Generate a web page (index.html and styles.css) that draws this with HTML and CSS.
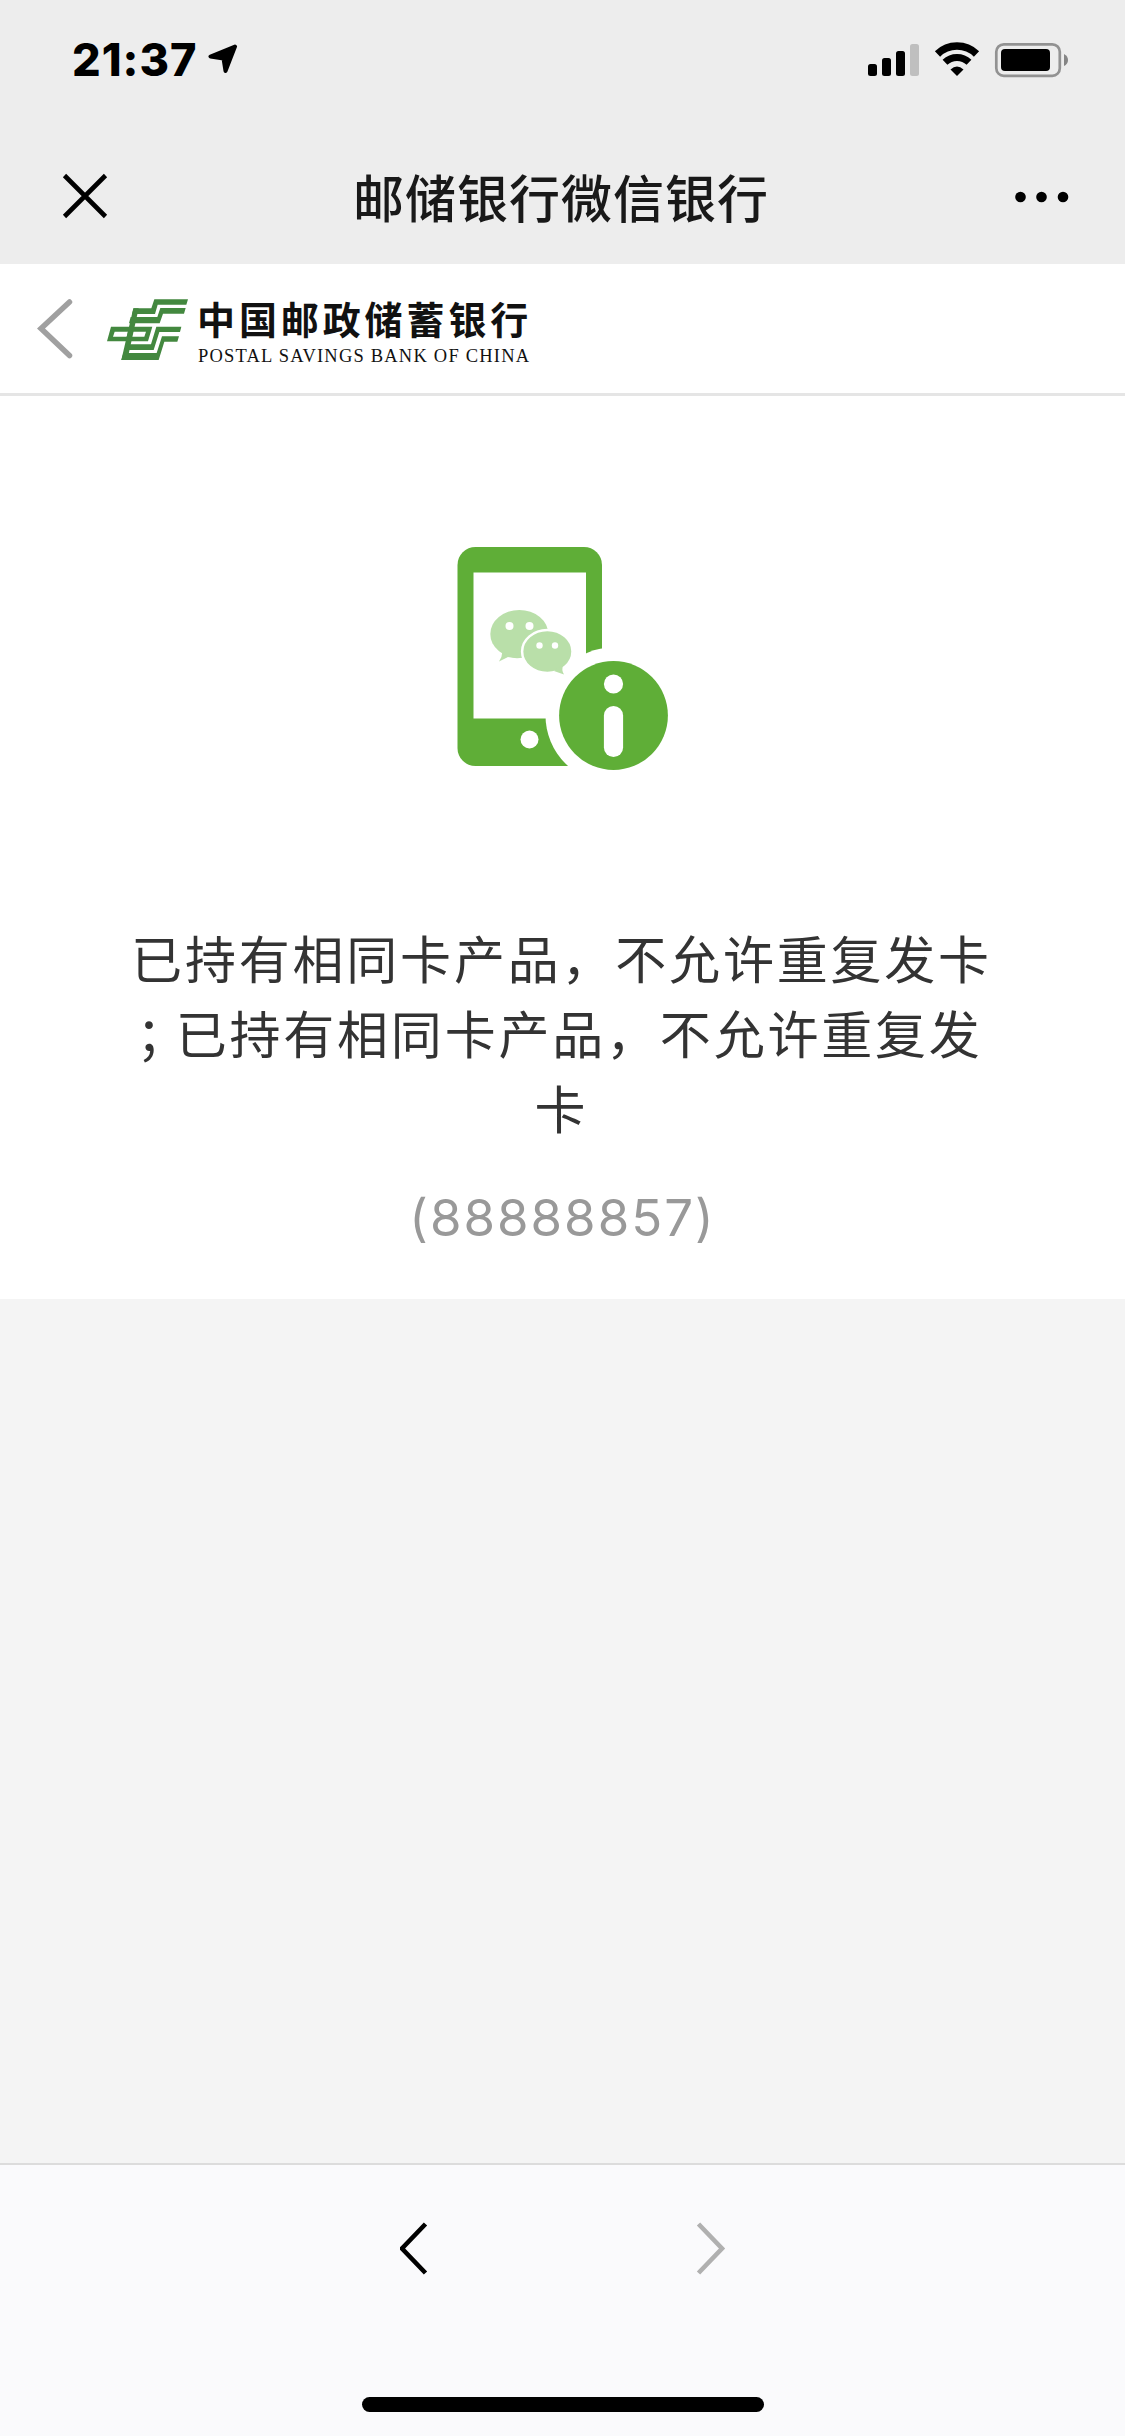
FILE: index.html
```html
<!DOCTYPE html>
<html lang="zh-CN">
<head>
<meta charset="utf-8">
<title>邮储银行微信银行</title>
<link rel="stylesheet" href="styles.css">
</head>
<body>
<div class="screen">
  <header class="top">
    <div class="status">
      <span class="time">21:37</span>
      <svg class="location" width="30" height="30" viewBox="0 0 30 30"><path d="M27 2.500 2.500 12.500 15.500 14.500 17.500 27Z" fill="#000" stroke="#000" stroke-width="4" stroke-linejoin="round"/></svg>
      <svg class="indicators" width="202" height="36" viewBox="867 42 202 36">
        <rect x="868" y="64" width="9" height="12" rx="2.500"/>
        <rect x="882" y="58" width="9" height="18" rx="2.500"/>
        <rect x="896" y="51" width="9" height="25" rx="2.500"/>
        <rect x="910" y="44" width="9" height="32" rx="2.500" fill="#bfbfbf"/>
        <path d="M937.500 54A28 28 0 0 1 976.500 54" fill="none" stroke="#000" stroke-width="7.500"/>
        <path d="M945 62.300A17.500 17.500 0 0 1 969 62.300" fill="none" stroke="#000" stroke-width="7"/>
        <path d="M950.500 69.500Q957 63.500 963.500 69.500L957 76Z"/>
        <rect x="996.300" y="44.300" width="63.500" height="31.500" rx="7.500" fill="none" stroke="#929292" stroke-width="2.700"/>
        <rect x="1001" y="49" width="49" height="22" rx="4"/>
        <path d="M1064 54Q1068 56 1068 60T1064 66Z" fill="#858585"/>
      </svg>
    </div>
    <div class="nav">
      <svg class="close" width="46" height="46" viewBox="0 0 46 46"><path d="M2.500 2.500 43.500 43.500M43.500 2.500 2.500 43.500" stroke="#000" stroke-width="4.600"/></svg>
      <h1 class="title">邮储银行微信银行</h1>
      <svg class="more" width="56" height="12" viewBox="0 0 56 12"><circle cx="6.500" cy="6" r="5.300"/><circle cx="27.500" cy="6" r="5.300"/><circle cx="49" cy="6" r="5.300"/></svg>
    </div>
  </header>
  <div class="brand">
    <svg class="back" width="36" height="62" viewBox="0 0 36 62"><path d="M32.500 4 4 30.500 32.500 57.500" fill="none" stroke="#a0a0a0" stroke-width="5.500" stroke-linecap="round"/></svg>
    <svg class="logo" width="82" height="62" viewBox="261 86 246 186">
      <g fill="#43883f">
        <path d="M403 87H504L499 103H413L405 131H336L341 114H394Z"/>
        <path d="M421 113H497L492 130H429L419 159H327L332 140H412Z"/>
        <path d="M340 114H356L322 269H304Z"/>
        <path fill-rule="evenodd" d="M273 169H397L384 213H261ZM284 184 279 199H373L378 184Z"/>
        <path d="M325 180H340L334 204H319Z"/>
        <path d="M409 169H484L480 185H418L401 239H313L318 222H393Z"/>
        <path d="M426 198H477L472 214H433L416 269H304L310 248H410Z"/>
      </g>
    </svg>
    <div class="wordmark">
      <span class="name">中国邮政储蓄银行</span>
      <span class="english">POSTAL SAVINGS BANK OF CHINA</span>
    </div>
  </div>
  <main class="result">
    <svg class="picture" width="212" height="224" viewBox="457 546 212 224">
      <rect x="457.500" y="547" width="144.500" height="219" rx="18" fill="#5fae37"/>
      <rect x="473.500" y="572.500" width="112.500" height="146" fill="#fff"/>
      <circle cx="529.500" cy="739.500" r="9" fill="#fff"/>
      <circle cx="613.500" cy="715.500" r="68" fill="#fff"/>
      <circle cx="613.500" cy="715.500" r="54.400" fill="#5fae37"/>
      <circle cx="613.500" cy="684" r="9.600" fill="#fff"/>
      <rect x="603.900" y="706" width="19.200" height="51" rx="9.600" fill="#fff"/>
      <g fill="#b9dfa9">
        <path d="M502 650Q503 656 499 661.500L508 657Q514 658.500 520 658L535 640Z"/>
        <ellipse cx="519.300" cy="634" rx="29" ry="24"/>
        <ellipse cx="547.300" cy="651.600" rx="25.200" ry="21.500" stroke="#fff" stroke-width="2.500"/>
        <path d="M554 671 564 674.500Q561 670 563.500 664Z"/>
      </g>
      <g fill="#fff"><circle cx="509.500" cy="626" r="4"/><circle cx="529.500" cy="626" r="4"/><circle cx="539.500" cy="645.500" r="3.200"/><circle cx="555" cy="645.500" r="3.200"/></g>
    </svg>
    <p class="message">
      <span class="line">已持有相同卡产品，不允许重复发卡</span>
      <span class="line"><span class="semi">；</span>已持有相同卡产品，不允许重复发</span>
      <span class="line">卡</span>
    </p>
    <p class="code">(88888857)</p>
  </main>
  <footer class="bottom">
    <div class="history">
      <svg width="30" height="54" viewBox="0 0 30 54"><path d="M25.500 3 2 27.500 25.500 52" fill="none" stroke="#000" stroke-width="4.600"/></svg>
      <svg width="30" height="54" viewBox="0 0 30 54"><path d="M2.500 3 26 27.500 2.500 52" fill="none" stroke="#b0b0b0" stroke-width="4.600"/></svg>
    </div>
    <div class="home"></div>
  </footer>
</div>
</body>
</html>
```
FILE: styles.css
```css
* { box-sizing: border-box; }
body { margin: 0; font-family: Inter, "Noto Sans CJK SC", sans-serif; }
svg { display: block; flex: none; }
.screen { width: 1125px; height: 2436px; display: flex; flex-direction: column; background: #f4f4f4; overflow: hidden; }
.top { height: 264px; background: #ededed; }
.status { height: 132px; display: flex; align-items: flex-start; padding: 42px 56px 0 72px; }
.time { font-size: 45px; line-height: 36px; font-weight: 800; letter-spacing: 1px; width: 136px; white-space: nowrap; }
.location { margin-top: 2px; }
.indicators { margin-left: auto; }
.nav { height: 130px; display: flex; align-items: center; justify-content: space-between; padding: 0 55px 2px 62px; }
.title { margin: 0; font: 500 51px/72px "Noto Sans CJK SC", sans-serif; letter-spacing: 1px; color: #191919; white-space: nowrap; }
.more { margin-top: 1px; }
.brand { height: 132px; background: #fff; border-bottom: 3px solid #e5e5e5; display: flex; align-items: flex-start; padding: 34px 0 0 37px; }
.logo { margin: 1px 0 0 34px; }
.wordmark { display: flex; flex-direction: column; margin-left: 8px; color: #111; white-space: nowrap; }
.name { font: 700 38px/40px "Noto Sans CJK SC", sans-serif; letter-spacing: 3.900px; }
.english { font: 18.500px/24px "Liberation Serif", serif; letter-spacing: 1.200px; margin: 6px 0 0 1px; }
.result { height: 903px; background: #fff; display: flex; flex-direction: column; align-items: center; padding-top: 150px; }
.message { margin: 150px 0 0; width: 862px; font: 400 51px/75px "Noto Sans CJK SC", sans-serif; letter-spacing: 2.800px; color: #333; text-align: center; }
.line { display: block; white-space: nowrap; margin-left: -2px; }
.semi { font-feature-settings: "halt"; margin-left: -4px; padding-right: 11px; }
.code { margin: 33px 0 0; font-size: 51px; line-height: 80px; font-weight: 400; letter-spacing: 2px; color: #999; }
.bottom { margin-top: auto; height: 273px; background: #fafafc; border-top: 2px solid #dcdcdc; display: flex; flex-direction: column; align-items: center; justify-content: space-between; padding: 56px 0 24px; }
.history { width: 326px; display: flex; justify-content: space-between; }
.home { width: 402px; height: 15px; border-radius: 8px; background: #000; }
```
